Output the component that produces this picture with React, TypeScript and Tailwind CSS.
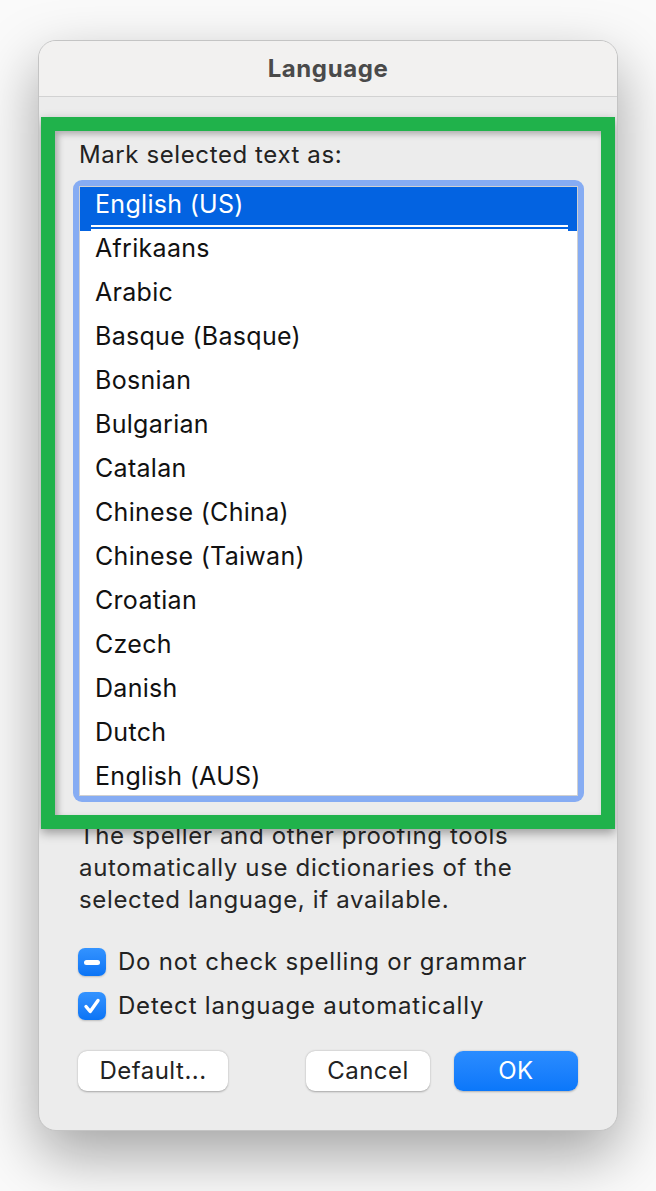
const languages = [
  'English (US)',
  'Afrikaans',
  'Arabic',
  'Basque (Basque)',
  'Bosnian',
  'Bulgarian',
  'Catalan',
  'Chinese (China)',
  'Chinese (Taiwan)',
  'Croatian',
  'Czech',
  'Danish',
  'Dutch',
  'English (AUS)',
]

function Checkbox({ kind }: { kind: 'mixed' | 'checked' }) {
  return (
    <div className="w-[28px] h-[28px] rounded-[7px] bg-gradient-to-b from-[#3393ff] to-[#0a74f5] shadow-[0_1px_2px_rgba(0,0,0,0.2)] flex items-center justify-center shrink-0">
      {kind === 'mixed' ? (
        <div className="w-[16px] h-[5px] rounded-full bg-white" />
      ) : (
        <svg width="18" height="18" viewBox="0 0 18 18" fill="none">
          <path d="M3 9.5 L7.2 14.5 L15 3.5" stroke="white" strokeWidth="3.4" strokeLinecap="round" strokeLinejoin="round" />
        </svg>
      )}
    </div>
  )
}

export default function App() {
  return (
    <div className="w-[656px] h-[1191px] bg-[#fafafa] pt-[40px] pl-[38px]" style={{ fontFamily: 'Inter, "Noto Sans", sans-serif' }}>
      <div className="w-[580px] h-[1091px] rounded-[18px] border border-[#c4c4c4] bg-[#ececec] shadow-[0_24px_60px_rgba(0,0,0,0.35)] overflow-hidden flex flex-col">
        {/* Title bar */}
        <div className="h-[56px] bg-[#f2f1f0] border-b border-[#d2d2d2] flex items-center justify-center shrink-0">
          <span className="text-[24px] font-bold text-[#4a4a4a] tracking-[0.6px]">Language</span>
        </div>

        {/* Highlighted area */}
        <div className="relative z-10 mt-[20px] mx-[2px] h-[712px] border-[14px] border-[#20b24b] bg-[#ececec] shadow-[0_4px_10px_rgba(0,0,0,0.35)] flex flex-col shrink-0">
          <div className="absolute inset-0 pointer-events-none shadow-[inset_3px_3px_6px_rgba(0,0,0,0.28)]" />
          <div className="pl-[24px] pt-[10px] text-[24px] leading-[28px] tracking-[0.6px] text-[#222]">Mark selected text as:</div>
          <div className="mt-[11px] ml-[18px] mr-[17px] h-[622px] rounded-[9px] bg-[#86acf3] p-[6px]">
            <div className="h-full bg-white border border-[#d0d0d0] overflow-hidden">
              {languages.map((lang, i) => (
                <div
                  key={lang}
                  className={
                    i === 0
                      ? 'relative h-[44px] bg-[#0363e1] text-white pl-[15px] pb-[8px] flex items-center text-[25px] tracking-[0.3px]'
                      : 'h-[44px] text-[#111] pl-[15px] pb-[8px] flex items-center text-[25px] tracking-[0.3px]'
                  }
                >
                  {lang}
                  {i === 0 && (
                    <div className="absolute left-[11px] right-[9px] bottom-0 h-[6px] flex flex-col">
                      <div className="h-[2px] bg-white" />
                      <div className="h-[2px] bg-[#0363e1]" />
                      <div className="h-[2px] bg-white" />
                    </div>
                  )}
                </div>
              ))}
            </div>
          </div>
        </div>

        {/* Description */}
        <div className="-mt-[9px] pl-[40px] pr-[10px] text-[24px] leading-[32px] tracking-[0.65px] text-[#262626]">
          The speller and other proofing tools<br />
          automatically use dictionaries of the<br />
          selected language, if available.
        </div>

        {/* Checkboxes */}
        <div className="mt-[32px] pl-[39px] flex flex-col gap-[16px]">
          <div className="h-[28px] flex items-center gap-[12px] text-[24px] leading-[28px] tracking-[0.8px] text-[#222]">
            <Checkbox kind="mixed" />
            <span>Do not check spelling or grammar</span>
          </div>
          <div className="h-[28px] flex items-center gap-[12px] text-[24px] leading-[28px] tracking-[0.8px] text-[#222]">
            <Checkbox kind="checked" />
            <span>Detect language automatically</span>
          </div>
        </div>

        {/* Buttons */}
        <div className="mt-[31px] pl-[39px] pr-[39px] flex items-center">
          <button className="w-[150px] h-[40px] rounded-[9px] bg-white shadow-[0_0.5px_2px_rgba(0,0,0,0.3)] text-[24px] tracking-[0.5px] text-[#222]">Default...</button>
          <div className="flex-1" />
          <button className="w-[124px] h-[40px] rounded-[9px] bg-white shadow-[0_0.5px_2px_rgba(0,0,0,0.3)] text-[24px] tracking-[0.5px] text-[#222]">Cancel</button>
          <button className="ml-[24px] w-[124px] h-[40px] rounded-[9px] bg-gradient-to-b from-[#2a8cff] to-[#0a77fa] shadow-[0_0.5px_2px_rgba(0,0,0,0.25)] text-[24px] tracking-[0.5px] text-white">OK</button>
        </div>
      </div>
    </div>
  )
}
